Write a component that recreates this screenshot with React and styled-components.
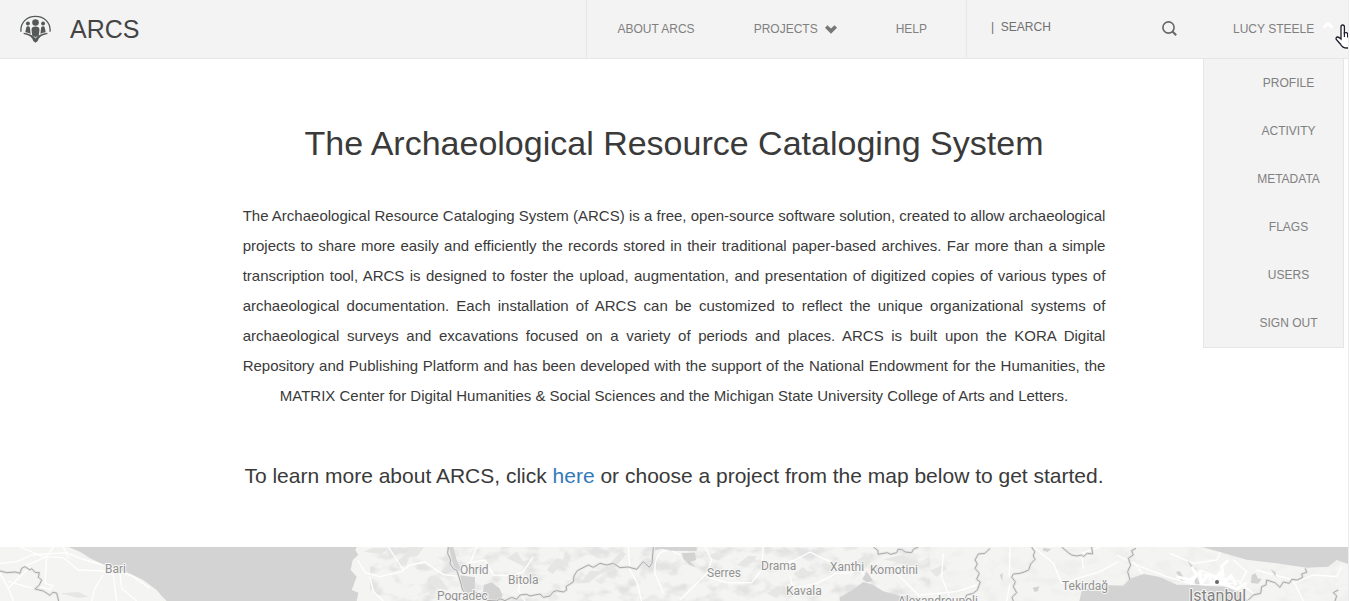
import React from 'react';
import styled, { createGlobalStyle } from 'styled-components';

const sans = '"Liberation Sans", Arial, sans-serif';

const GlobalStyle = createGlobalStyle`
  * { box-sizing: border-box; }
  body {
    margin: 0;
    background: #fff;
    color: #3a3a3a;
    font-family: ${sans};
    overflow: hidden;
  }
`;

const Page = styled.div`
  position: relative;
  margin-right: 1px;
  border-right: 1px solid #ececec;
  height: 100vh;
  overflow: hidden;
`;

const Header = styled.header`
  display: flex;
  align-items: stretch;
  min-height: 59px;
  background: #f3f3f3;
  border-bottom: 1px solid #e6e6e6;
`;

const Brand = styled.a`
  flex: 1;
  display: flex;
  align-items: center;
  gap: 19px;
  padding-left: 20px;
  color: #444;
  font-size: 25px;
  text-decoration: none;
`;

const Nav = styled.nav`
  display: flex;
  align-items: center;
  gap: 59px;
  padding: 0 39px 0 30px;
  border: solid #e6e6e6;
  border-width: 0 1px;
`;

const NavLink = styled.a`
  display: flex;
  align-items: center;
  gap: 7px;
  color: #808080;
  font-size: 12px;
  line-height: 16px;
  text-decoration: none;
`;

const Search = styled.form`
  display: flex;
  align-items: center;
  width: 236px;
  padding: 0 26px 2px 24px;
`;

const SearchInput = styled.input`
  flex: 1;
  min-width: 0;
  padding: 0 0 2px;
  border: 0;
  outline: 0;
  background: transparent;
  font: 12px ${sans};
  color: #707070;
  &::placeholder { color: #707070; opacity: 1; }
`;

const IconButton = styled.button`
  display: flex;
  padding: 0;
  border: 0;
  background: none;
  color: #666;
`;

const Account = styled.div`
  position: relative;
  display: flex;
  width: 145px;
`;

const AccountButton = styled.button`
  display: flex;
  align-items: center;
  gap: 8px;
  padding: 0 0 0 30px;
  border: 0;
  background: none;
  color: #808080;
  font: 12px/16px ${sans};
  white-space: nowrap;
`;

const Caret = styled.svg`
  margin-bottom: 8px;
`;

const Menu = styled.ul`
  position: absolute;
  top: 100%;
  right: 4px;
  width: 141px;
  margin: 0;
  padding: 0 0 0 30px;
  list-style: none;
  background: #f3f3f3;
  border: 1px solid #e6e6e6;
`;

const MenuLink = styled.a`
  display: block;
  color: #808080;
  font-size: 12px;
  line-height: 48px;
  text-align: center;
  text-decoration: none;
`;

const Main = styled.main`
  width: 64%;
  margin: 0 auto;
  padding: 64px 0 56px;
  text-align: center;
`;

const Title = styled.h1`
  margin: 0 0 38px;
  font-size: 34px;
  font-weight: 400;
  line-height: 40px;
`;

const Intro = styled.p`
  margin: 0 0 50px;
  font-size: 15px;
  line-height: 30px;
  text-align: justify;
  text-align-last: center;
`;

const Lead = styled.p`
  margin: 0;
  font-size: 21px;
  line-height: 30px;
  white-space: nowrap;
`;

const InlineLink = styled.a`
  color: #337ab7;
  text-decoration: none;
`;

const MapImage = styled.svg`
  display: block;
  width: 100%;
  height: 54px;
`;

const MapLabel = styled.text`
  font-family: Roboto, sans-serif;
  font-size: ${(p) => (p.$large ? 16 : 12)}px;
  fill: ${(p) => (p.$large ? '#828282' : '#929292')};
  stroke: #f7f7f6;
  stroke-width: 2px;
  stroke-linejoin: round;
  paint-order: stroke;
`;

const Pointer = styled.svg`
  position: absolute;
  top: 24px;
  right: -6px;
`;

const Logo = () => (
  <svg width="31" height="28" viewBox="28 24 94 83" fill="#555a58" aria-hidden="true">
    <path d="M31 74C28 46 49 27 75 27s47 19 44 47" fill="none" stroke="#555a58" strokeWidth="4" />
    <circle cx="75" cy="46" r="10" />
    <path d="M65 86 63 68q0-10 12-10t12 10l-2 18q-6 1-10 5-4-4-10-5Z" />
    <circle cx="52" cy="49" r="6" />
    <path d="M44 75l3-14q1-4 5-4t6 4l2 19q-8-4-16-5Z" />
    <circle cx="98" cy="49" r="6" />
    <path d="M106 75l-3-14q-1-4-5-4t-6 4l-2 19q8-4 16-5Z" />
    <path d="M39 77q26 3 36 17 10-14 36-17v4q-17 3-26 13-1 7-10 13-9-6-10-13-9-10-26-13Z" />
  </svg>
);

const MENU = ['Profile', 'Activity', 'Metadata', 'Flags', 'Users', 'Sign out'];

const LABELS = [
  ['Bari', 105, 26], ['Ohrid', 460, 27], ['Bitola', 508, 37], ['Pogradec', 437, 53],
  ['Serres', 707, 30], ['Drama', 761, 23], ['Kavala', 786, 48], ['Xanthi', 830, 24],
  ['Komotini', 870, 27], ['Alexandroupoli', 898, 58], ['Tekirdağ', 1062, 43],
];

const SEA = [
  'M205 21 240 35 270 55 315 76 385 98 430 120 470 150 485 168 500 183H1070L1075 158 1055 150 1070 110 1052 90 1058 60 1075 45 1066 30 1070 21Z',
  'M1346 21 1362 80 1392 106 1370 60 1360 21Z',
  'M1380 106 1425 112 1424 160 1400 170 1388 150Z',
  'M1452 135 1475 127 1498 145 1508 165 1500 183H1465L1448 160Z',
  'M2045 39 2085 38 2088 60 2070 65 2088 82 2068 74 2050 56Z',
  'M2520 183 2518 172 2552 154 2590 126 2620 135 2648 153 2700 168 2790 174 2800 183Z',
  'M2587 118 2600 94 2620 124 2600 127Z',
  'M3000 105 3008 98 3007 125Z',
  'M1965 21h125v12l-78-1-25-6-22 5Z',
  'M3238 183 3246 150 3310 135 3370 137 3390 116 3430 102 3480 111 3530 134 3590 135 3620 138 3690 140 3720 156 3745 183Z',
  'M3605 21 3660 36 3740 59 3830 70 3920 83 3985 80 4010 60 4044 72V21Z',
  'M3528 95 3540 94 3555 121 3544 122Z',
  'M3562 60 3590 90 3576 90Z',
  'M3582 113h10l8 20h-14Z',
  'M3755 105l12-5 6 15 12 2-10 14-22-2Z',
  'M3812 87l16 10-2 14Z',
  'M3098 143l20-4-4 14-10 3Z',
  'M3130 24l24 3-12 9-14-5Z',
];

const SHADE = [
  'M1190 65l30-25 12-18h40l-20 26-24 4-10 25-26 2Z',
  'M1280 120l15-15 30 14 20 32-40-8Z',
  'M1640 90l30-35 20 5 6-28 18 18-12 28-26 4-18 20Z',
  'M1740 130l30-38 28 2 34-26 34-36 12 10-34 42-48 20-30 24Z',
  'M1520 55l30-20 20 30 18-8 12 26-36-8Z',
  'M2210 75l35-28 25 2-10 16-28 16Z',
  'M2120 50l25-12 30 6-20 18Z',
  'M2380 105l28-24 14 12 26 4-24 14Z',
  'M2560 68l34-22 20 18-22 22Z',
  'M2650 58l60-14 40 25-22 8-45-12Z',
  'M2790 92l40-18 10 12-30 24Z',
  'M2300 160l34-22 18 8-22 28Z',
  'M1090 35l30-12 50 3-28 16Z',
  'M180 160l55-4 30 14-30 4Z',
];

const ROADS = [
  'M0 70 50 65 95 45 200 38 240 55 310 75 400 110 450 145',
  'M60 21 130 50 190 53 235 90 310 93 340 105 350 183',
  'M70 80 140 50 135 130 160 137 150 148 120 140',
  'M140 50 160 21M190 21 205 53M0 100 25 145 90 80M25 145 40 183',
  'M310 105 285 145 275 183M360 100 365 145 410 183M25 125 100 145',
  'M1073 60 1095 98 1140 110 1205 94 1230 75 1275 66 1330 104 1385 110',
  'M1110 110 1120 155 1150 183M1165 21 1210 90',
  'M1400 70 1455 60 1480 105 1565 107 1555 150 1575 183M1600 50 1570 95 1530 110',
  'M1430 21 1405 80M1885 21 1890 90 1910 125 1925 183',
  'M2010 30Q1960 30 1965 100L1990 160M2010 30 2040 45',
  'M2115 21 2135 60 2120 100 2040 180M2120 110 2180 128 2255 128 2285 90 2290 21',
  'M2330 80 2385 60 2430 36 2500 70 2580 90 2610 126',
  'M2370 110 2380 145 2450 130 2510 100 2560 98',
  'M2690 100 2755 165 2760 183M2830 40 2825 110 2850 175M2760 165 2870 155 2930 135',
  'M3030 130 3020 183M3030 21 3028 110M3100 21 3160 70 3185 130 3300 95 3355 65',
  'M3250 85 3245 40 3300 21M3350 45 3410 75 3500 110 3590 135 3700 130',
  'M3400 65 3430 105M3510 40 3580 70 3650 60 3670 21M3600 90 3650 110 3720 125',
  'M3700 60 3740 95 3720 130 3760 160M3880 130 3940 105 4010 110 4025 80M3770 90 3880 120 3910 183',
];

const BORDERS = [
  'M0 93 20 98 45 96 60 100 65 85 75 80 90 90 95 86 105 97 118 98 115 112 125 120 118 135 105 147 130 153 150 166 158 157 170 159 176 183',
  'M1345 21 1343 40 1352 60 1350 72 1362 88 1370 90 1380 120 1388 150 1400 164 1430 158 1455 165 1460 181 1490 183 1500 176 1515 182 1535 172 1550 178 1560 165 1580 163 1590 168 1620 162 1630 172 1650 168 1660 155 1670 152 1690 156 1700 150 1698 140 1720 126 1722 108 1732 92 1765 75 1780 82 1800 70 1820 75 1840 70 1860 83 1885 81 1910 88 1930 65 1948 82 1956 70 1960 21',
  'M2620 21 2634 32 2634 43 2662 38 2672 43 2690 38 2694 28 2705 28 2715 36 2735 38 2740 28 2755 21',
  'M2970 25 2955 40 2935 42 2925 60 2932 72 2925 85 2938 100 2930 118 2941 126 2932 150 2920 160 2900 165 2895 178 2870 183',
  'M3095 21 3104 35 3100 48 3105 58 3092 72 3086 90 3075 95 3060 100 3040 102 3035 112 3046 125 3040 140 3050 158 3036 172 3040 183',
  'M3185 21 3205 38 3215 45 3230 48 3245 45 3250 50 3262 40 3278 42 3275 21M3408 25 3395 32 3400 45 3385 55 3392 75 3383 95 3390 120',
  'M3916 85 3920 97 3905 102 3908 112 3892 120 3875 118 3868 130 3850 126 3840 142 3825 128 3800 120 3798 135 3785 140 3782 160 3760 165 3745 180M4015 150 4000 158 4010 168 4005 183',
];

const CITY_SPRAWL = 'M3575 80l15 25-20 28M3600 90l4 40 22-28 10 30 25-36 8 35 24-24 15 28M3610 105l45 5 35 25M3640 120l70 28 30-20M3530 110l40 10 30-22M3685 60l-20 20 5 30';

function RegionMap() {
  return (
    <MapImage viewBox="0 0 1348 54" preserveAspectRatio="xMidYMin slice" role="img" aria-label="Project map">
      <defs>
        <filter id="relief" x="0" y="0" width="100%" height="100%" colorInterpolationFilters="sRGB">
          <feTurbulence type="fractalNoise" baseFrequency="0.05 0.08" numOctaves="3" seed="8" />
          <feColorMatrix values="0 0 0 0 .8  0 0 0 0 .8  0 0 0 0 .8  4 0 0 0 -1.9" />
        </filter>
      </defs>
      <rect width="1348" height="54" fill="#f4f4f3" />
      <rect x="370" width="560" height="54" filter="url(#relief)" opacity=".4" />
      <rect x="930" width="418" height="54" filter="url(#relief)" opacity=".12" />
      <g transform="translate(0 -7) scale(.33333)" fill="none" strokeLinejoin="round">
        <g fill="#e6e6e5">{SHADE.map((d) => <path key={d} d={d} />)}</g>
        <g stroke="#fff" strokeWidth="4">{ROADS.map((d) => <path key={d} d={d} />)}</g>
        <g fill="#d3d3d3">{SEA.map((d) => <path key={d} d={d} />)}</g>
        <g stroke="#e6e6e6" strokeWidth="8">{BORDERS.map((d) => <path key={d} d={d} />)}</g>
        <g stroke="#aaa" strokeWidth="3">{BORDERS.map((d) => <path key={d} d={d} />)}</g>
        <path d={CITY_SPRAWL} stroke="#fff" strokeWidth="9" />
      </g>
      {LABELS.map(([name, x, y]) => <MapLabel key={name} x={x} y={y}>{name}</MapLabel>)}
      <MapLabel $large x="1189" y="54">Istanbul</MapLabel>
      <circle cx="1217" cy="35" r="2" fill="#666" />
    </MapImage>
  );
}

export default function App() {
  return (
    <>
      <GlobalStyle />
      <Page>
        <Header>
          <Brand href="#"><Logo />ARCS</Brand>
          <Nav>
            <NavLink href="#about">ABOUT ARCS</NavLink>
            <NavLink href="#projects">
              PROJECTS
              <svg width="12" height="9" viewBox="0 0 12 9" aria-hidden="true">
                <path d="M0 2.700 2.500.2 6 3.600 9.500.2 12 2.700 6 8.700Z" fill="#777" />
              </svg>
            </NavLink>
            <NavLink href="#help">HELP</NavLink>
          </Nav>
          <Search role="search">
            <SearchInput type="text" aria-label="Search" placeholder="|  SEARCH" />
            <IconButton type="button" aria-label="Search">
              <svg width="15" height="15" viewBox="0 0 15 15" fill="none" stroke="currentColor">
                <circle cx="6.5" cy="6.5" r="5.6" strokeWidth="1.6" />
                <path d="m10.5 10.5 3.700 3.700" strokeWidth="2" />
              </svg>
            </IconButton>
          </Search>
          <Account>
            <AccountButton type="button" aria-expanded="true">
              LUCY STEELE
              <Caret width="12" height="8" viewBox="0 0 12 8" aria-hidden="true">
                <path d="M.6 5.600 6 .3l5.400 5.300L9.300 7.700 6 4.500 2.700 7.700Z" fill="#fff" />
              </Caret>
            </AccountButton>
            <Menu>
              {MENU.map((item) => (
                <li key={item}><MenuLink href="#">{item.toUpperCase()}</MenuLink></li>
              ))}
            </Menu>
          </Account>
        </Header>
        <Main>
          <Title>The Archaeological Resource Cataloging System</Title>
          <Intro>
            The Archaeological Resource Cataloging System (ARCS) is a free, open-source software solution,
            created to allow archaeological projects to share more easily and efficiently the records stored
            in their traditional paper-based archives. Far more than a simple transcription tool, ARCS is
            designed to foster the upload, augmentation, and presentation of digitized copies of various types
            of archaeological documentation. Each installation of ARCS can be customized to reflect the unique
            organizational systems of archaeological surveys and excavations focused on a variety of periods
            and places. ARCS is built upon the KORA Digital Repository and Publishing Platform and has been
            developed with the support of the National Endowment for the Humanities, the MATRIX Center for
            Digital Humanities &amp; Social Sciences and the Michigan State University College of Arts and
            Letters.
          </Intro>
          <Lead>
            To learn more about ARCS, click <InlineLink href="#here">here</InlineLink> or choose a project
            from the map below to get started.
          </Lead>
        </Main>
        <RegionMap />
        <Pointer width="19" height="25" viewBox="0 0 19 25" aria-hidden="true">
          <path
            d="M6 15V3q0-2 1.700-2T9.400 3v6q2.600-1.200 3.200.8 2.400-.8 3 1 2.400-.3 2.400 2v5q0 6-5.500 6.200-5 .2-7-3.800L1.300 15.500q-.8-2 1-2.500 1.300-.2 3.700 2Z"
            fill="#fff" stroke="#1d1d2b" strokeWidth="1.300"
          />
          <path d="M9.400 8.500V13M12.600 10v3.500M15.600 11v3" stroke="#1d1d2b" strokeWidth="1.200" />
        </Pointer>
      </Page>
    </>
  );
}
